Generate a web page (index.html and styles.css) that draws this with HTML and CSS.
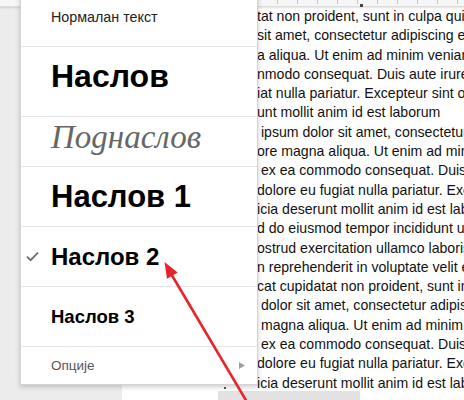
FILE: index.html
```html
<!DOCTYPE html>
<html lang="sr">
<head>
  <meta charset="UTF-8" />
  <title>Стилови текста</title>
  <link rel="stylesheet" href="styles.css">
</head>
<body>
  <div class="screen">
    <div class="ruler">
      <div class="ticks"></div>
      <i class="indent"></i>
    </div>

    <div class="page" lang="la">
      <div class="line">tat non proident, sunt in culpa qui</div>
      <div class="line">sit amet, consectetur adipiscing elit</div>
      <div class="line">a aliqua. Ut enim ad minim veniam,</div>
      <div class="line">nmodo consequat. Duis aute irure</div>
      <div class="line">iat nulla pariatur. Excepteur sint oc</div>
      <div class="line">unt mollit anim id est laborum</div>
      <div class="line">&nbsp;ipsum dolor sit amet, consectetur</div>
      <div class="line">ore magna aliqua. Ut enim ad minim</div>
      <div class="line">&nbsp;ex ea commodo consequat. Duis</div>
      <div class="line">dolore eu fugiat nulla pariatur. Exc</div>
      <div class="line">icia deserunt mollit anim id est labo</div>
      <div class="line">d do eiusmod tempor incididunt ut</div>
      <div class="line">ostrud exercitation ullamco laboris</div>
      <div class="line">n reprehenderit in voluptate velit es</div>
      <div class="line">cat cupidatat non proident, sunt in</div>
      <div class="line">&nbsp;dolor sit amet, consectetur adipis</div>
      <div class="line">&nbsp;magna aliqua. Ut enim ad minim</div>
      <div class="line">&nbsp;ex ea commodo consequat. Duis</div>
      <div class="line">dolore eu fugiat nulla pariatur. Exc</div>
      <div class="line">icia deserunt mollit anim id est labo</div>
    </div>

    <div class="hbar"><i></i></div>

    <ul class="menu">
      <li class="item normal"><span class="mark"></span>Нормалан текст</li>
      <li class="item title"><span class="mark"></span>Наслов</li>
      <li class="item subtitle"><span class="mark"></span>Поднаслов</li>
      <li class="item h1"><span class="mark"></span>Наслов 1</li>
      <li class="item h2 is-checked">
        <span class="mark">
          <svg width="13" height="11" viewBox="0 0 13 11"><path d="M1 5.6 L4.6 9.2 L12 1.6" fill="none" stroke="#6b6b6b" stroke-width="1.7"/></svg>
        </span>Наслов 2
      </li>
      <li class="item h3"><span class="mark"></span>Наслов 3</li>
      <li class="item options">
        <span class="mark"></span>Опције
        <svg class="sub" width="6" height="7" viewBox="0 0 6 7"><path d="M0 0 L6 3.5 L0 7 Z" fill="#a0a0a0"/></svg>
      </li>
    </ul>

    <!-- annotation arrow -->
    <svg class="arrow" width="464" height="400" viewBox="0 0 464 400">
      <line x1="247" y1="402" x2="170" y2="272" stroke="#e8232b" stroke-width="2.6"/>
      <path d="M164.5 262 L177.6 272.6 L167 278.8 Z" fill="#e8232b"/>
    </svg>
  </div>
</body>
</html>
```

FILE: styles.css
```css
* {
  box-sizing: border-box;
}

body {
  margin: 0;
  background: #ececec;
  font-family: "Liberation Sans", Arial, sans-serif;
}

.screen {
  position: relative;
  width: 464px;
  height: 400px;
  overflow: hidden;
}

/* top ruler */
.ruler {
  position: relative;
  height: 7px;
  background: #f6f6f6;
  border-bottom: 1px solid #dcdcdc;
  box-shadow: 0 1px 2px rgba(0, 0, 0, 0.12);

  .ticks {
    height: 4px;
    margin-left: 258px;
    background: repeating-linear-gradient(90deg, transparent 0 19px, #c4c4c4 19px 20px);
  }

  .indent {
    position: absolute;
    left: 360px;
    top: 4px;
    width: 3px;
    height: 3px;
    background: #444;
  }
}

/* document page behind the menu */
.page {
  margin-left: 122px;
  height: 393px;
  padding-left: 135px;
  background: #fff;
  font-size: 14.1px;
  line-height: 19.3px;
  color: #111;

  .line {
    white-space: nowrap;
  }
}

.hbar {
  position: absolute;
  left: 218px;
  bottom: 0;
  width: 142px;
  height: 9px;
  background: #e2e2e2;

  i {
    position: absolute;
    left: 6px;
    top: -4px;
    width: 2px;
    height: 2px;
    background: #555;
  }
}

/* styles dropdown */
.menu {
  position: absolute;
  left: 20px;
  top: -14px;
  width: 238px;
  margin: 0;
  padding: 0;
  list-style: none;
  background: #fff;
  border: 1px solid #d4d4d4;
  box-shadow: 0 2px 5px rgba(0, 0, 0, 0.2);
}

.item {
  display: flex;
  align-items: center;
  height: 60px;
  border-top: 1px solid #e6e6e6;
  color: #000;
  white-space: nowrap;

  .mark {
    display: flex;
    flex: none;
    width: 30px;
    padding-left: 5px;
  }

  &.normal {
    height: 59px;
    border-top: 0;
    font-size: 14.3px;
    color: #222;
  }

  &.title {
    height: 70px;
    padding-bottom: 11px;
    font-size: 32px;
    font-weight: 700;
  }

  &.subtitle {
    height: 50px;
    padding-bottom: 9px;
    font-family: "Liberation Serif", Georgia, serif;
    font-style: italic;
    font-size: 33px;
    color: #666;
  }

  &.h1 {
    font-size: 31px;
    font-weight: 700;
  }

  &.h2 {
    font-size: 24px;
    font-weight: 700;
  }

  &.h3 {
    font-size: 18.5px;
    font-weight: 700;
  }

  &.options {
    height: 38px;
    font-size: 13.5px;
    color: #555;

    .sub {
      margin-left: auto;
      margin-right: 12px;
    }
  }
}

.arrow {
  position: absolute;
  left: 0;
  top: 0;
  pointer-events: none;
}
```
